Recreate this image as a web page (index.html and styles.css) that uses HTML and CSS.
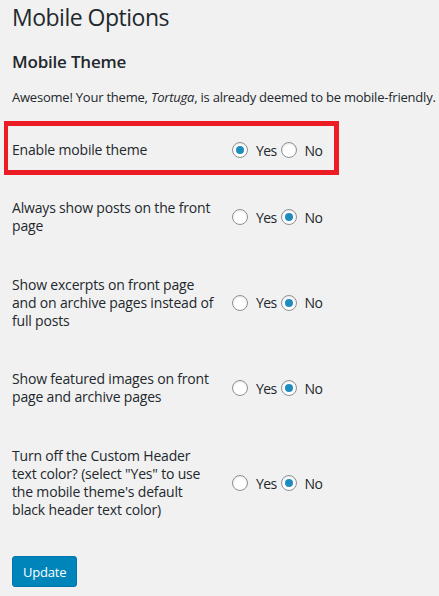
FILE: index.html
```html
<!DOCTYPE html>
<html lang="en">
<head>
<meta charset="utf-8">
<title>Mobile Options</title>
<link rel="stylesheet" href="styles.css">
</head>
<body>
<div class="wrap">
  <h1 class="page-title">Mobile Options</h1>
  <h2 class="section-title">Mobile Theme</h2>
  <p class="notice">Awesome! Your theme, <em>Tortuga</em>, is already deemed to be mobile-friendly.</p>
  <form class="options">
    <div class="row row-highlight">
      <div class="label">Enable mobile theme</div>
      <div class="field">
        <label class="choice"><input type="radio" name="o1" checked><span>Yes</span></label>
        <label class="choice"><input type="radio" name="o1"><span>No</span></label>
      </div>
      <div class="highlight-box"></div>
    </div>
    <div class="row">
      <div class="label">Always show posts on the front<br>page</div>
      <div class="field">
        <label class="choice"><input type="radio" name="o2"><span>Yes</span></label>
        <label class="choice"><input type="radio" name="o2" checked><span>No</span></label>
      </div>
    </div>
    <div class="row">
      <div class="label">Show excerpts on front page<br>and on archive pages instead of<br>full posts</div>
      <div class="field">
        <label class="choice"><input type="radio" name="o3"><span>Yes</span></label>
        <label class="choice"><input type="radio" name="o3" checked><span>No</span></label>
      </div>
    </div>
    <div class="row">
      <div class="label">Show featured images on front<br>page and archive pages</div>
      <div class="field">
        <label class="choice"><input type="radio" name="o4"><span>Yes</span></label>
        <label class="choice"><input type="radio" name="o4" checked><span>No</span></label>
      </div>
    </div>
    <div class="row">
      <div class="label">Turn off the Custom Header<br>text color? (select "Yes" to use<br>the mobile theme's default<br>black header text color)</div>
      <div class="field">
        <label class="choice"><input type="radio" name="o5"><span>Yes</span></label>
        <label class="choice"><input type="radio" name="o5" checked><span>No</span></label>
      </div>
    </div>
    <div class="submit">
      <button type="button" class="button-primary">Update</button>
    </div>
  </form>
</div>
</body>
</html>
```
FILE: styles.css
```css
html, body {
  margin: 0;
  padding: 0;
  background: #f1f1f1;
}
body {
  font-family: "Segoe UI", "Open Sans", "Noto Sans", sans-serif;
  color: #23282d;
  font-size: 13px;
}
.wrap {
  padding: 2px 0 0 12px;
}
.page-title {
  margin: 0;
  font-size: 23px;
  font-weight: 400;
  line-height: 30px;
  letter-spacing: -0.5px;
}
.section-title {
  margin: 19px 0 0;
  font-size: 17px;
  font-weight: 600;
  line-height: 22px;
  letter-spacing: -0.2px;
}
.notice {
  margin: 14px 0 0;
  font-size: 13px;
  line-height: 20px;
  white-space: nowrap;
  letter-spacing: -0.22px;
}
.options {
  margin-top: 14px;
}
.row {
  display: grid;
  grid-template-columns: 210px auto;
  align-items: center;
  position: relative;
}
.label {
  padding: 20px 10px 20px 0;
  font-size: 14px;
  line-height: 18.2px;
  white-space: nowrap;
  letter-spacing: -0.18px;
}
.field {
  padding-left: 10px;
  display: flex;
  align-items: center;
  font-size: 14px;
}
.choice {
  display: inline-flex;
  align-items: center;
  margin-right: 4px;
}
.choice span {
  margin-left: 8px;
  letter-spacing: -0.6px;
}
.choice input {
  -webkit-appearance: none;
  appearance: none;
  margin: 0;
  width: 16px;
  height: 16px;
  box-sizing: border-box;
  border: 1px solid #8c9096;
  border-radius: 50%;
  background: #fff;
  box-shadow: inset 0 1px 2px rgba(0, 0, 0, 0.1);
  display: inline-flex;
  align-items: center;
  justify-content: center;
}
.choice input:checked::before {
  content: "";
  width: 8px;
  height: 8px;
  border-radius: 50%;
  background: #1e8cbe;
}
.highlight-box {
  position: absolute;
  left: -8px;
  top: 0;
  width: 335px;
  height: 54px;
  box-sizing: border-box;
  border: 5px solid #ed1c24;
  border-left-width: 4px;
  pointer-events: none;
}
.submit {
  margin-top: 17px;
}
.button-primary {
  height: 31px;
  padding: 0 10px;
  border: 1px solid #0073aa;
  border-radius: 3px;
  background: #0085ba;
  color: #fff;
  font-family: inherit;
  font-size: 13px;
  line-height: 31px;
  letter-spacing: -0.2px;
  cursor: pointer;
}
```
